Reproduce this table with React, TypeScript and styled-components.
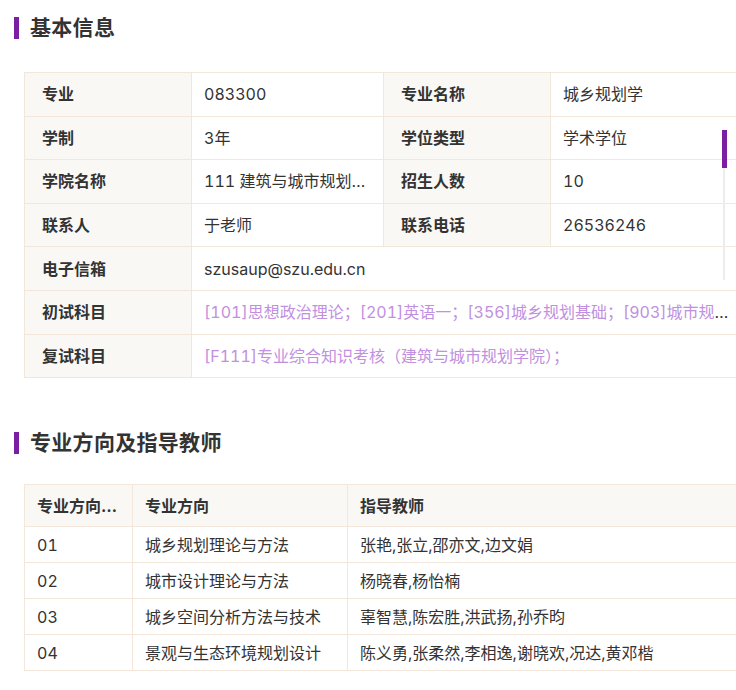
import React from "react";
import styled, { createGlobalStyle } from "styled-components";

const GlobalStyle = createGlobalStyle`
  html, body {
    margin: 0;
    padding: 0;
    background: #ffffff;
    overflow-x: hidden;
  }
  body {
    font-family: Inter, "Noto Sans CJK SC", sans-serif;
    font-variant-numeric: tabular-nums;
    color: #333333;
  }
`;

const Page = styled.div`
  width: 736px;
  overflow: hidden;
  padding: 17px 0 20px 14px;
  box-sizing: border-box;
`;

const SectionTitle = styled.h2<{ $top?: number }>`
  display: flex;
  align-items: center;
  gap: 11px;
  margin: ${(p) => p.$top ?? 0}px 0 0 0;
  height: 22px;
  font-size: 21px;
  line-height: 22px;
  font-weight: 700;
  color: #333333;
  letter-spacing: 0.3px;
  &::before {
    content: "";
    display: block;
    width: 5px;
    height: 22px;
    background: #7a1fa2;
  }
`;

const TableWrap = styled.div<{ $top: number }>`
  position: relative;
  margin: ${(p) => p.$top}px 0 0 10px;
  width: 719px;
`;

const Table = styled.table`
  width: 719px;
  border-collapse: collapse;
  table-layout: fixed;
  font-size: 16px;
`;

const Cell = styled.td<{ $label?: boolean }>`
  border: 1px solid #f3e6da;
  background: ${(p) => (p.$label ? "#faf8f5" : "#ffffff")};
  font-weight: ${(p) => (p.$label ? 700 : 400)};
  padding: 0 12px 0 ${(p) => (p.$label ? 17 : 12)}px;
  height: 43.6px;
  line-height: 20px;
  color: #333333;
  white-space: nowrap;
  overflow: hidden;
  text-overflow: ellipsis;
  box-sizing: border-box;
  text-align: left;
`;

const HeadCell = styled.th`
  border: 1px solid #f3e6da;
  background: #faf8f5;
  font-weight: 700;
  padding: 0 12px;
  height: 41px;
  line-height: 20px;
  color: #333333;
  white-space: nowrap;
  overflow: hidden;
  text-overflow: ellipsis;
  text-align: left;
`;

const BodyCell = styled.td`
  border: 1px solid #f3e6da;
  padding: 0 12px;
  height: 35px;
  line-height: 20px;
  color: #333333;
  white-space: nowrap;
  overflow: hidden;
  text-overflow: ellipsis;
  text-align: left;
`;

const Link = styled.span`
  color: #c190e0;
`;

const ScrollTrack = styled.div`
  position: absolute;
  left: 699px;
  top: 58px;
  width: 2px;
  height: 150px;
  background: #ececec;
`;

const ScrollThumb = styled.div`
  position: absolute;
  left: -1px;
  top: 0;
  width: 5px;
  height: 38px;
  background: #7a1fa2;
`;

const basic = [
  [["专业", "083300"], ["专业名称", "城乡规划学"]],
  [["学制", "3年"], ["学位类型", "学术学位"]],
  [["学院名称", "111 建筑与城市规划学院"], ["招生人数", "10"]],
  [["联系人", "于老师"], ["联系电话", "26536246"]],
];

const firstExam = ["[101]思想政治理论；", "[201]英语一；", "[356]城乡规划基础；", "[903]城市规划原理；"];

const directions = [
  ["01", "城乡规划理论与方法", "张艳,张立,邵亦文,边文娟"],
  ["02", "城市设计理论与方法", "杨晓春,杨怡楠"],
  ["03", "城乡空间分析方法与技术", "辜智慧,陈宏胜,洪武扬,孙乔昀"],
  ["04", "景观与生态环境规划设计", "陈义勇,张柔然,李相逸,谢晓欢,况达,黄邓楷"],
];

export default function App() {
  return (
    <>
      <GlobalStyle />
      <Page>
        <SectionTitle>基本信息</SectionTitle>
        <TableWrap $top={33}>
          <Table>
            <colgroup>
              <col style={{ width: 167 }} />
              <col style={{ width: 192 }} />
              <col style={{ width: 167 }} />
              <col style={{ width: 193 }} />
            </colgroup>
            <tbody>
              {basic.map((row, i) => (
                <tr key={i}>
                  {row.map(([k, v]) => (
                    <React.Fragment key={k}>
                      <Cell $label>{k}</Cell>
                      <Cell>{v}</Cell>
                    </React.Fragment>
                  ))}
                </tr>
              ))}
              <tr>
                <Cell $label>电子信箱</Cell>
                <Cell colSpan={3}>szusaup@szu.edu.cn</Cell>
              </tr>
              <tr>
                <Cell $label>初试科目</Cell>
                <Cell colSpan={3}>
                  {firstExam.map((s) => (
                    <Link key={s}>{s}</Link>
                  ))}
                </Cell>
              </tr>
              <tr>
                <Cell $label>复试科目</Cell>
                <Cell colSpan={3}>
                  <Link>[F111]专业综合知识考核（建筑与城市规划学院）；</Link>
                </Cell>
              </tr>
            </tbody>
          </Table>
          <ScrollTrack>
            <ScrollThumb />
          </ScrollTrack>
        </TableWrap>

        <SectionTitle $top={54}>专业方向及指导教师</SectionTitle>
        <TableWrap $top={30}>
          <Table>
            <colgroup>
              <col style={{ width: 108 }} />
              <col style={{ width: 215 }} />
              <col style={{ width: 396 }} />
            </colgroup>
            <thead>
              <tr>
                <HeadCell>专业方向代码</HeadCell>
                <HeadCell>专业方向</HeadCell>
                <HeadCell>指导教师</HeadCell>
              </tr>
            </thead>
            <tbody>
              {directions.map((d) => (
                <tr key={d[0]}>
                  <BodyCell>{d[0]}</BodyCell>
                  <BodyCell>{d[1]}</BodyCell>
                  <BodyCell>{d[2]}</BodyCell>
                </tr>
              ))}
            </tbody>
          </Table>
        </TableWrap>
      </Page>
    </>
  );
}
